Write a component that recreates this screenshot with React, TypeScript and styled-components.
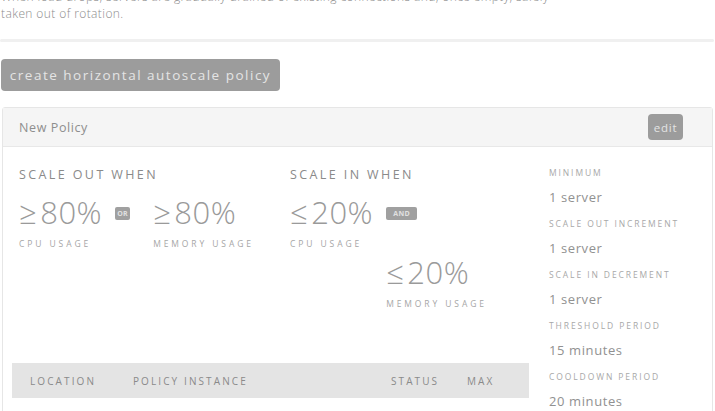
import React from "react";
import styled, { createGlobalStyle } from "styled-components";

const Global = createGlobalStyle`
  html, body { margin: 0; padding: 0; background: #ffffff; }
  body { font-family: "Open Sans", "Liberation Sans", sans-serif; color: #888; overflow: hidden; }
  * { box-sizing: border-box; }
`;

const Page = styled.div`
  width: 715px;
  display: flex;
  flex-direction: column;
`;

const Intro = styled.p`
  margin: -12px 0 0 1px;
  font-size: 12px;
  line-height: 17px;
  font-weight: 300;
  letter-spacing: 0.4px;
  color: #8c8c8c;
  width: 712px;
  white-space: nowrap;
`;

const Divider = styled.div`
  margin: 17px 1px 0 0;
  height: 3px;
  border-radius: 2px;
  background: #f0f0f0;
`;

const PrimaryButton = styled.button`
  align-self: flex-start;
  margin: 17px 0 0 1px;
  height: 32px;
  width: 279px;
  border: none;
  border-radius: 4px;
  background: #9c9c9c;
  color: #e4e4e4;
  font-family: inherit;
  font-size: 13.5px;
  letter-spacing: 1.5px;
  padding: 0;
`;

const Panel = styled.section`
  margin: 16px 2px 0 2px;
  border: 1px solid #e6e6e6;
  border-radius: 3px;
  background: #fff;
`;

const PanelHeader = styled.header`
  height: 39px;
  display: flex;
  align-items: center;
  justify-content: space-between;
  padding: 0 29px 0 16px;
  background: #f5f5f5;
  border-bottom: 1px solid #e8e8e8;
  font-size: 12.5px;
  letter-spacing: 0.6px;
  color: #8e8e8e;
`;

const SmallButton = styled.button`
  height: 26px;
  width: 35px;
  border: none;
  border-radius: 4px;
  background: #9c9c9c;
  color: #e4e4e4;
  font-family: inherit;
  font-size: 11.5px;
  letter-spacing: 0.8px;
  padding: 0;
`;

const PanelBody = styled.div`
  display: grid;
  grid-template-columns: 517px 1fr;
  column-gap: 20px;
  padding: 20px 0 0 9px;
`;

const Conditions = styled.div`
  display: flex;
  padding-left: 7px;
  height: 196px;
`;

const ConditionGroup = styled.div<{ $width?: number }>`
  width: ${(p) => (p.$width ? `${p.$width}px` : "auto")};
  display: flex;
  flex-direction: column;
`;

const GroupTitle = styled.div`
  font-size: 12.5px;
  line-height: 16px;
  letter-spacing: 2.4px;
  color: #8a8a8a;
  text-transform: uppercase;
  margin-bottom: 11px;
  white-space: nowrap;
`;

const MetricRow = styled.div`
  display: flex;
  align-items: flex-start;
`;

const Connector = styled.div<{ $stacked?: boolean }>`
  display: flex;
  flex-direction: ${(p) => (p.$stacked ? "column" : "row")};
  align-items: flex-start;
  gap: ${(p) => (p.$stacked ? "34px" : "23px")};
  margin-left: 13px;
`;

const Metric = styled.div`
  display: flex;
  flex-direction: column;
`;

const Value = styled.div`
  font-size: 31px;
  line-height: 36px;
  font-weight: 300;
  color: #9a9a9a;
  letter-spacing: 0.5px;
  white-space: nowrap;
`;

const Op = styled.span`
  margin-right: 3px;
`;

const MetricLabel = styled.div`
  margin-top: 8px;
  font-size: 8.5px;
  line-height: 12px;
  letter-spacing: 2.9px;
  color: #a6a6a6;
  text-transform: uppercase;
  white-space: nowrap;
`;

const Badge = styled.span<{ $wide?: boolean }>`
  margin-top: 13px;
  height: 13px;
  width: ${(p) => (p.$wide ? "31px" : "15px")};
  border-radius: 2px;
  background: #a0a0a0;
  color: #e0e0e0;
  font-size: 7px;
  line-height: 13px;
  font-weight: 700;
  text-align: center;
  letter-spacing: 0.3px;
`;

const TableHead = styled.div`
  display: grid;
  grid-template-columns: 103px 258px 76px 1fr;
  align-items: center;
  height: 35px;
  padding-left: 18px;
  background: #e4e4e4;
  font-size: 10px;
  letter-spacing: 2.1px;
  color: #8a8a8a;
  text-transform: uppercase;
  white-space: nowrap;
`;

const Settings = styled.dl`
  margin: 0;
  display: flex;
  flex-direction: column;
`;

const SettingLabel = styled.dt`
  font-size: 8.5px;
  line-height: 12px;
  letter-spacing: 1.9px;
  color: #a8a8a8;
  text-transform: uppercase;
  white-space: nowrap;
`;

const SettingValue = styled.dd`
  margin: 10px 0 13px 0;
  font-size: 13px;
  line-height: 16px;
  letter-spacing: 0.6px;
  color: #919191;
`;

const settings = [
  ["Minimum", "1 server"],
  ["Scale out increment", "1 server"],
  ["Scale in decrement", "1 server"],
  ["Threshold period", "15 minutes"],
  ["Cooldown period", "20 minutes"],
];

function MetricView({ op, value, label }: { op: string; value: string; label: string }) {
  return (
    <Metric>
      <Value>
        <Op>{op}</Op>
        {value}
      </Value>
      <MetricLabel>{label}</MetricLabel>
    </Metric>
  );
}

export default function App() {
  return (
    <Page>
      <Global />
      <Intro>
        When load drops, servers are gradually drained of existing connections and, once empty, safely
        <br />
        taken out of rotation.
      </Intro>
      <Divider />
      <PrimaryButton>create horizontal autoscale policy</PrimaryButton>
      <Panel>
        <PanelHeader>
          <span>New Policy</span>
          <SmallButton>edit</SmallButton>
        </PanelHeader>
        <PanelBody>
          <div>
            <Conditions>
              <ConditionGroup $width={271}>
                <GroupTitle>Scale out when</GroupTitle>
                <MetricRow>
                  <MetricView op="≥" value="80%" label="CPU usage" />
                  <Connector>
                    <Badge>OR</Badge>
                    <MetricView op="≥" value="80%" label="Memory usage" />
                  </Connector>
                </MetricRow>
              </ConditionGroup>
              <ConditionGroup>
                <GroupTitle>Scale in when</GroupTitle>
                <MetricRow>
                  <MetricView op="≤" value="20%" label="CPU usage" />
                  <Connector $stacked>
                    <Badge $wide>AND</Badge>
                    <MetricView op="≤" value="20%" label="Memory usage" />
                  </Connector>
                </MetricRow>
              </ConditionGroup>
            </Conditions>
            <TableHead>
              <span>Location</span>
              <span>Policy instance</span>
              <span>Status</span>
              <span>Max</span>
            </TableHead>
          </div>
          <Settings>
            {settings.map(([k, v]) => (
              <React.Fragment key={k}>
                <SettingLabel>{k}</SettingLabel>
                <SettingValue>{v}</SettingValue>
              </React.Fragment>
            ))}
          </Settings>
        </PanelBody>
      </Panel>
    </Page>
  );
}
